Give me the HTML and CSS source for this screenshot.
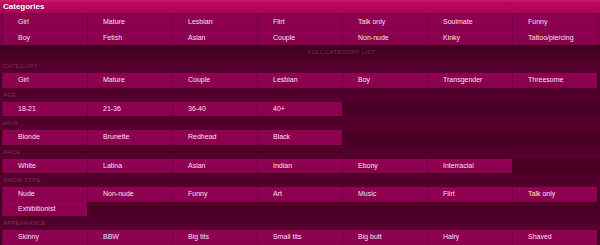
FILE: index.html
```html
<!DOCTYPE html>
<html lang="en">
<head>
    <meta charset="UTF-8">
    <title>Categories</title>
    <link rel="stylesheet" href="styles.css">
</head>
<body>

    <div class="panel">
        <div class="panel-head">Categories</div>

        <!-- Quick picks -->
        <ul class="quick-grid">
            <li>Girl</li>
            <li>Mature</li>
            <li>Lesbian</li>
            <li>Flirt</li>
            <li>Talk only</li>
            <li>Soulmate</li>
            <li>Funny</li>
            <li>Boy</li>
            <li>Fetish</li>
            <li>Asian</li>
            <li>Couple</li>
            <li>Non-nude</li>
            <li>Kinky</li>
            <li>Tattoo/piercing</li>
        </ul>

        <div class="full-link">Full category list</div>

        <!-- Full list -->
        <div class="group">
            <div class="group-label">Category</div>
            <ul class="tag-grid">
                <li>Girl</li>
                <li>Mature</li>
                <li>Couple</li>
                <li>Lesbian</li>
                <li>Boy</li>
                <li>Transgender</li>
                <li>Threesome</li>
            </ul>
        </div>

        <div class="group">
            <div class="group-label">Age</div>
            <ul class="tag-grid">
                <li>18-21</li>
                <li>21-36</li>
                <li>36-40</li>
                <li>40+</li>
            </ul>
        </div>

        <div class="group">
            <div class="group-label">Hair</div>
            <ul class="tag-grid">
                <li>Blonde</li>
                <li>Brunette</li>
                <li>Redhead</li>
                <li>Black</li>
            </ul>
        </div>

        <div class="group">
            <div class="group-label">Race</div>
            <ul class="tag-grid">
                <li>White</li>
                <li>Latina</li>
                <li>Asian</li>
                <li>Indian</li>
                <li>Ebony</li>
                <li>Interracial</li>
            </ul>
        </div>

        <div class="group">
            <div class="group-label">Show type</div>
            <ul class="tag-grid">
                <li>Nude</li>
                <li>Non-nude</li>
                <li>Funny</li>
                <li>Art</li>
                <li>Music</li>
                <li>Flirt</li>
                <li>Talk only</li>
                <li>Exhibitionist</li>
            </ul>
        </div>

        <div class="group">
            <div class="group-label">Appearance</div>
            <ul class="tag-grid">
                <li>Skinny</li>
                <li>BBW</li>
                <li>Big tits</li>
                <li>Small tits</li>
                <li>Big butt</li>
                <li>Hairy</li>
                <li>Shaved</li>
            </ul>
        </div>
    </div>

</body>
</html>
```

FILE: styles.css
```css
* {
    margin: 0;
    padding: 0;
    box-sizing: border-box;
}

body {
    font-family: "Liberation Sans", Arial, sans-serif;
    background: #4a0024;
    width: 600px;
    height: 245px;
    overflow: hidden;
}

.panel {
    background: #4a0024;
}

.panel-head {
    height: 14px;
    line-height: 13px;
    padding-left: 3px;
    font-size: 8px;
    font-weight: bold;
    color: #fff;
    background: linear-gradient(to bottom, #d01a6c 0%, #b8065a 25%, #b0045a 85%, #7a0040 100%);
}

.quick-grid {
    list-style: none;
    display: grid;
    grid-template-columns: repeat(7, 85px);
    padding: 0 2px;
    background: #80004a;
}

.quick-grid li {
    height: 15.5px;
    line-height: 16px;
    padding-left: 15px;
    font-size: 7px;
    color: #f6e2ec;
    white-space: nowrap;
    background: linear-gradient(to bottom, #8f0053 0%, #86004d 100%);
    border-left: 1px solid #73003f;
}

.full-link {
    height: 14px;
    line-height: 15px;
    font-size: 6px;
    text-transform: uppercase;
    letter-spacing: 0.2px;
    color: #7a2a55;
    text-align: center;
    padding-left: 83px;
    background: linear-gradient(to bottom, #3e001e 0%, #4a0026 100%);
}

.group-label {
    height: 14px;
    line-height: 14px;
    padding-left: 3px;
    font-size: 6px;
    text-transform: uppercase;
    letter-spacing: 0.2px;
    color: #7e2c58;
    background: linear-gradient(to bottom, #4e0028 0%, #56002e 100%);
}

.tag-grid {
    list-style: none;
    display: grid;
    grid-template-columns: repeat(7, 85px);
    padding: 0 2px;
}

.tag-grid li {
    height: 14.5px;
    line-height: 14.5px;
    padding-left: 15px;
    font-size: 7px;
    color: #f6e2ec;
    white-space: nowrap;
    background: linear-gradient(to bottom, #920054 0%, #88004d 100%);
    border-left: 1px solid #75003f;
}
```
